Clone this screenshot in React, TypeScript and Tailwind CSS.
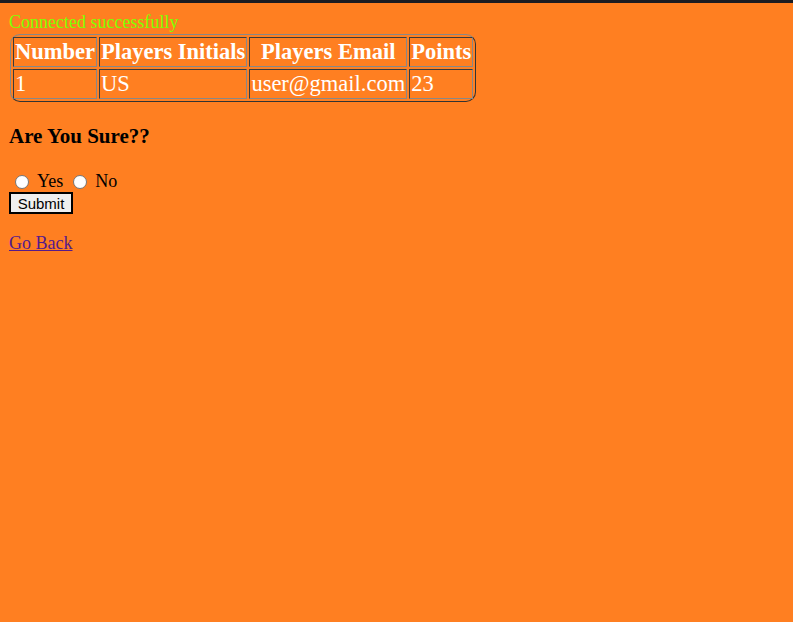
export default function App() {
  const thCls =
    "border border-t-[#3a3a3a] border-l-[#3a3a3a] border-r-[#888888] border-b-[#888888] p-[1px] font-bold text-center";
  const tdCls =
    "border border-t-[#3a3a3a] border-l-[#3a3a3a] border-r-[#888888] border-b-[#888888] p-[1px] text-left";
  const radioCls =
    "appearance-none shrink-0 w-[14px] h-[14px] rounded-full border-[1.5px] border-[#767676] bg-white";
  return (
    <div className="min-h-screen bg-[#ff7f21] border-t-[3px] border-[#1c1c22] px-[9px] pt-[9px] font-['Liberation_Serif',serif] text-[18px] text-black">
      <div className="text-[#80ff00] leading-[20.7px]">Connected successfully</div>
      <table className="mt-[1px] ml-[1px] border-separate border-spacing-[2px] border border-t-[#888888] border-l-[#888888] border-r-[#333333] border-b-[#333333] rounded-[10px] text-white text-[22.5px] leading-[25.9px]">
        <thead>
          <tr>
            <th className={thCls}>Number</th>
            <th className={thCls}>Players Initials</th>
            <th className={thCls}>Players Email</th>
            <th className={thCls}>Points</th>
          </tr>
        </thead>
        <tbody>
          <tr>
            <td className={tdCls}>1</td>
            <td className={tdCls}>US</td>
            <td className={tdCls}>user@gmail.com</td>
            <td className={tdCls}>23</td>
          </tr>
        </tbody>
      </table>
      <h3 className="mt-[22px] text-[21px] font-bold leading-[24px]">Are You Sure??</h3>
      <div className="mt-[23px] leading-[20.7px] flex items-end">
        <input type="radio" name="sure" className={`${radioCls} ml-[6px] mr-[8px] mb-[2px]`} />
        <span>Yes</span>
        <input type="radio" name="sure" className={`${radioCls} ml-[10px] mr-[8px] mb-[2px]`} />
        <span>No</span>
      </div>
      <button className="block mt-[1px] w-[64px] h-[22px] border-2 border-black bg-[#efefef] font-['Liberation_Sans',Arial,sans-serif] text-[15px] leading-[17px] text-black text-center p-0">
        Submit
      </button>
      <a href="#" className="block w-fit mt-[19px] leading-[20.7px] text-[#551a8b] underline">
        Go Back
      </a>
    </div>
  );
}
